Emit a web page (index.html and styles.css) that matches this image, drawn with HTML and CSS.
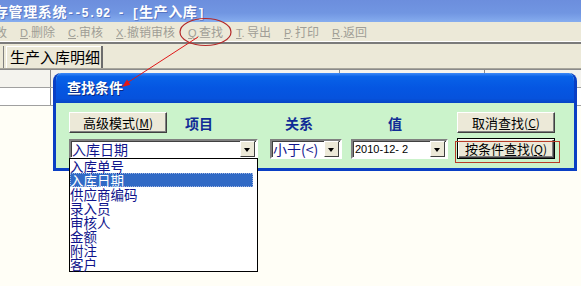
FILE: index.html
```html
<!DOCTYPE html>
<html lang="zh-CN">
<head>
  <meta charset="UTF-8">
  <meta name="viewport" content="width=device-width, initial-scale=1.0">
  <title>生产入库</title>
  <link rel="stylesheet" href="styles.css">
</head>
<body>
  <div class="app">
    <div class="titlebar">
      <span class="title">存管理系统<span class="latin">--5.92 - [</span>生产入库<span class="latin">]</span></span>
    </div>

    <div class="toolbar">
      <span class="tool tool-cut">改</span>
      <span class="tool"><span class="key"><u>D</u>.</span>删除</span>
      <span class="tool"><span class="key"><u>C</u>.</span>审核</span>
      <span class="tool"><span class="key"><u>X</u>.</span>撤销审核</span>
      <span class="tool"><span class="key"><u>Q</u>.</span>查找</span>
      <span class="tool"><span class="key"><u>T</u>.</span>导出</span>
      <span class="tool"><span class="key"><u>P</u>.</span>打印</span>
      <span class="tool"><span class="key"><u>R</u>.</span>返回</span>
    </div>

    <div class="tabstrip">
      <div class="tab">生产入库明细</div>
    </div>

    <div class="grid">
      <div class="grid-row grid-head">
        <div class="cell c1"></div>
        <div class="cell c2"></div>
        <div class="cell c3"></div>
        <div class="cell c4"></div>
      </div>
      <div class="grid-row">
        <div class="cell c1"></div>
        <div class="cell c2"></div>
        <div class="cell c3"></div>
        <div class="cell c4"></div>
      </div>
    </div>
  </div>

  <!-- search dialog, floating over the main window -->
  <div class="dialog">
    <div class="dialog-title">查找条件</div>
    <div class="dialog-body">
      <div class="row">
        <button class="btn">高级模式<span class="acc">(<u>M</u>)</span></button>
        <span class="label label-item">项目</span>
        <span class="label label-rel">关系</span>
        <span class="label label-val">值</span>
        <button class="btn">取消查找<span class="acc">(<u>C</u>)</span></button>
      </div>
      <div class="row">
        <div class="combo combo-field">
          <span class="combo-text">入库日期</span>
          <span class="combo-arrow"></span>
        </div>
        <div class="combo combo-rel">
          <span class="combo-text">小于(&lt;)</span>
          <span class="combo-arrow"></span>
        </div>
        <div class="combo combo-date">
          <span class="combo-text date-text">2010-12- 2</span>
          <span class="combo-arrow"></span>
        </div>
        <button class="btn btn-default">按条件查找<span class="acc">(<u>Q</u>)</span></button>
      </div>
    </div>
  </div>

  <ul class="dropdown">
    <li>入库单号</li>
    <li class="selected">入库日期</li>
    <li>供应商编码</li>
    <li>录入员</li>
    <li>审核人</li>
    <li>金额</li>
    <li>附注</li>
    <li>客户</li>
  </ul>

  <!-- red hand-drawn marks -->
  <svg class="marks" width="581" height="286" viewBox="0 0 581 286">
    <ellipse cx="205.5" cy="32" rx="25.5" ry="13.5" fill="none" stroke="#b42828" stroke-width="1.2"/>
    <line x1="198" y1="37" x2="127" y2="83" stroke="#e01818" stroke-width="1"/>
    <polygon points="122,87 130.5,84.8 127,79.6" fill="#e01818"/>
    <rect x="455.5" y="141.5" width="104" height="21" fill="none" stroke="#b83c28" stroke-width="1"/>
  </svg>
</body>
</html>
```

FILE: styles.css
```css
body {
  margin: 0;
  width: 581px;
  height: 286px;
  overflow: hidden;
  position: relative;
  background: #fffef6;
  font-family: "Noto Sans CJK SC", sans-serif;
}

.titlebar {
  height: 22px;
  background: linear-gradient(to bottom, #6c8edd 0%, #7196e2 60%, #86adef 100%);
  color: #fff;
  font-weight: bold;
  font-size: 14px;
  line-height: 22px;
  white-space: nowrap;
  overflow: hidden;
}
.title {
  display: inline-block;
  margin-left: -6px;
  letter-spacing: 0.6px;
  text-shadow: 1px 1px 0 rgba(40, 60, 140, 0.4);
}
.latin {
  font-family: "Liberation Mono", monospace;
  font-size: 12px;
  letter-spacing: 0;
}

.toolbar {
  height: 19px;
  display: flex;
  align-items: center;
  gap: 13px;
  background: #ece9d8;
  border-bottom: 1px solid #fff;
  color: #a09e96;
  font-size: 12px;
  white-space: nowrap;
  overflow: hidden;
}
.tool-cut {
  margin-left: -5px;
}
.key {
  display: inline-block;
  width: 11px;
  font-family: "Liberation Sans", sans-serif;
  font-size: 11px;
}

.tabstrip {
  height: 24px;
  background: #ece9d8;
  border-top: 2px solid #7b7b7b;
  border-bottom: 1px solid #a8a69c;
  display: flex;
  align-items: flex-end;
}
.tab {
  margin-left: 3px;
  height: 22px;
  width: 100px;
  box-sizing: border-box;
  border-left: 1px solid #808080;
  border-right: 2px solid #6c6c6c;
  box-shadow: inset 2px 0 0 #ece9d8, inset 3px 0 0 #fff, inset 0 1px 0 #fff;
  padding-left: 6px;
  font-size: 15px;
  line-height: 21px;
  color: #000;
}

.grid {
  border-top: 1px solid #8a8a8a;
}
.grid-row {
  display: flex;
  height: 17px;
  border-bottom: 1px solid #a0a0a0;
  background: #fff;
}
.grid-head {
  background: #f4f3ee;
}
.cell {
  border-right: 1px solid #8a8a8a;
}
.c1 { width: 50px; }
.c2 { width: 288px; }
.c3 { width: 144px; }
.c4 { flex: 1; border-right: none; }

.dialog {
  position: absolute;
  left: 53px;
  top: 73px;
  width: 524px;
  height: 98px;
  box-sizing: border-box;
  border: 3px solid #0a3fc4;
  border-top: none;
  border-radius: 8px 8px 0 0;
  background: #cbf3cb;
  overflow: hidden;
}
.dialog-title {
  height: 30px;
  margin: 0 -3px;
  padding-left: 14px;
  background: linear-gradient(to bottom, #3d8af7 0%, #0862e8 12%, #0556e2 50%, #0652dc 85%, #0644c4 100%);
  border-radius: 8px 8px 0 0;
  color: #fff;
  font-size: 14px;
  font-weight: bold;
  line-height: 29px;
  text-shadow: 1px 1px 0 #0a2a80;
}
.dialog-body {
  padding: 9px 0 0 13px;
}
.row {
  display: flex;
  align-items: center;
  height: 21px;
  margin-bottom: 5px;
}

.btn {
  width: 98px;
  height: 21px;
  padding: 0;
  background: #ece9d8;
  border: 1px solid;
  border-color: #fff #404040 #404040 #fff;
  box-shadow: inset -1px -1px 0 #808080;
  font-family: "Noto Sans CJK SC", sans-serif;
  font-size: 13px;
  line-height: 18px;
  color: #000;
}
.acc {
  font-size: 12px;
}
.btn-default {
  margin-left: 9px;
  border-color: #000;
  box-shadow: inset 1px 1px 0 #fff, inset -1px -1px 0 #404040, inset -2px -2px 0 #808080;
}

.label {
  box-sizing: border-box;
  color: #102c96;
  font-size: 14px;
  font-weight: bold;
}
.label-item { width: 103px; padding-left: 18px; }
.label-rel { width: 81px; padding-left: 15px; }
.label-val { width: 106px; padding-left: 37px; }

.combo {
  height: 20px;
  box-sizing: border-box;
  display: flex;
  background: #fff;
  border: 2px solid;
  border-color: #808080 #fff #fff #808080;
  box-shadow: inset 1px 1px 0 #404040;
}
.combo-field { width: 189px; }
.combo-rel { width: 72px; margin-left: 12px; }
.combo-date { width: 97px; margin-left: 9px; }
.combo-text {
  flex: 1;
  padding-left: 1px;
  font-size: 14px;
  line-height: 16px;
  color: #10148c;
  white-space: nowrap;
}
.date-text {
  padding-left: 2px;
  font-family: "Liberation Sans", sans-serif;
  font-size: 11px;
  color: #000;
}
.combo-arrow {
  width: 15px;
  box-sizing: border-box;
  margin: 0 1px 0 0;
  background: #ece9d8;
  border: 1px solid;
  border-color: #fff #404040 #404040 #fff;
  position: relative;
}
.combo-arrow::after {
  content: "";
  position: absolute;
  left: 3px;
  top: 6px;
  border-left: 3.5px solid transparent;
  border-right: 3.5px solid transparent;
  border-top: 4px solid #000;
}

.dropdown {
  position: absolute;
  left: 69px;
  top: 158px;
  width: 189px;
  box-sizing: border-box;
  margin: 0;
  padding: 0;
  list-style: none;
  background: #fff;
  border: 1px solid #000;
}
.dropdown li {
  height: 14px;
  margin-right: 4px;
  font-size: 13.5px;
  line-height: 14px;
  color: #10148c;
  white-space: nowrap;
}
.dropdown .selected {
  background: #316ac5;
  color: #fff;
  outline: 1px dotted #a0b4e0;
  outline-offset: -1px;
}

.marks {
  position: absolute;
  left: 0;
  top: 0;
  pointer-events: none;
}
```
